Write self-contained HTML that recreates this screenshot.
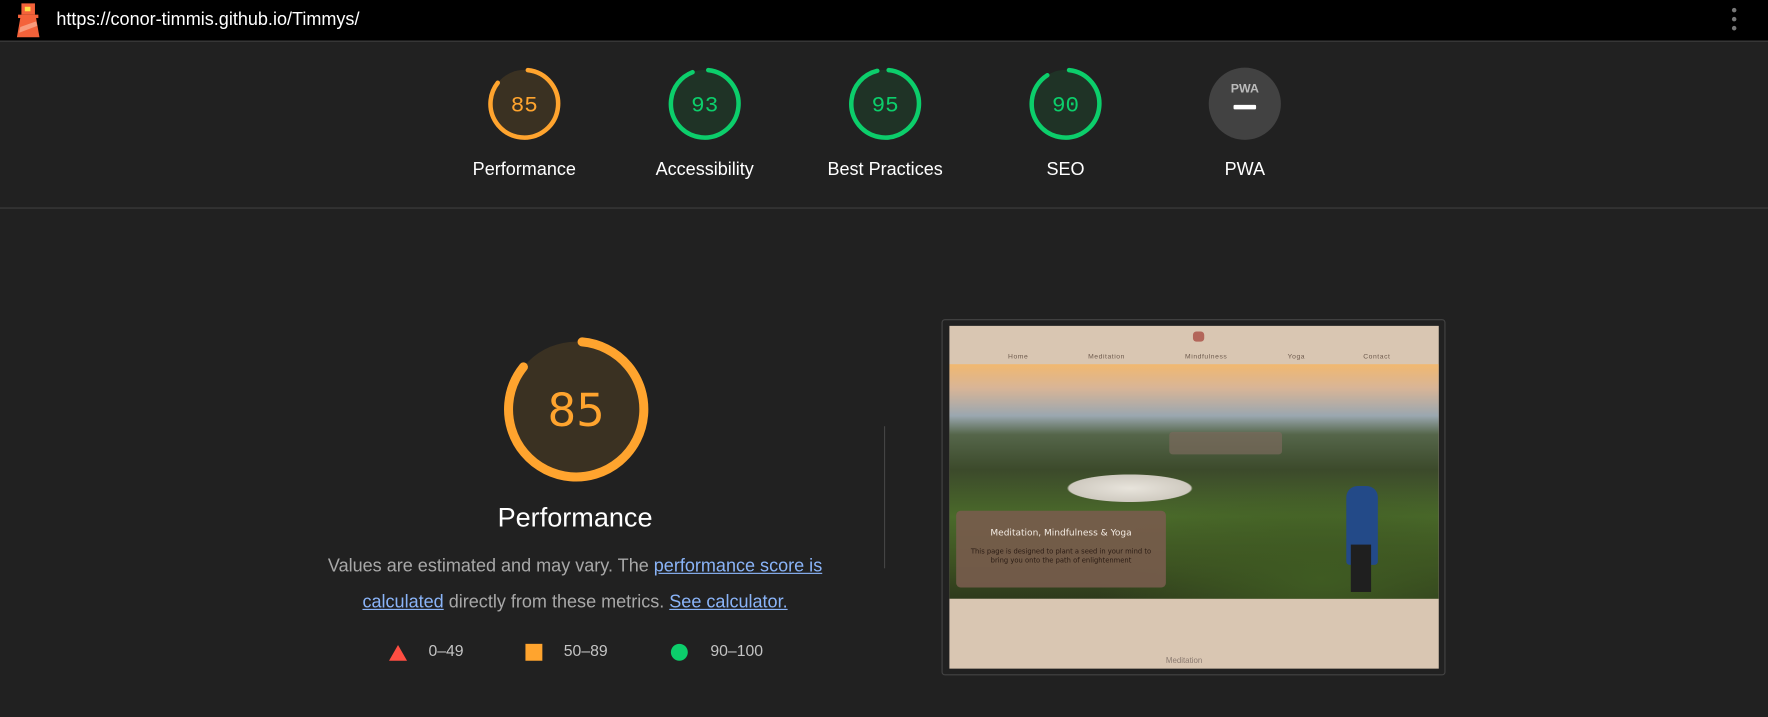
<!DOCTYPE html>
<html><head><meta charset="utf-8"><style>
*{margin:0;padding:0;box-sizing:border-box}
html,body{width:1768px;height:717px;background:#212121;overflow:hidden}
#w{position:absolute;left:0;top:0;width:1568px;height:636px;transform:scale(1.12755);transform-origin:0 0;font-family:"Liberation Sans",Arial,sans-serif;color:#fff}
.top{position:absolute;left:0;top:0;width:1568px;height:37px;background:#000;border-bottom:1px solid #444}
.url{position:absolute;left:50px;top:9px;font-size:16px;color:#fff}
.dots{position:absolute;left:1536px;top:7px}
.dots i{display:block;width:4px;height:4px;border-radius:2px;background:#777;margin-bottom:4px}
.sep{position:absolute;left:0;top:184px;width:1568px;height:1px;background:#3d3d3d}
.g{position:absolute;top:58px;width:140px;text-align:center}
.g svg{display:block;margin:0 auto}
.g .lab{margin-top:16px;font-size:16px;color:#fff}
.num{font-family:"Liberation Mono","DejaVu Sans Mono",monospace}
.desc{position:absolute;left:270px;top:487px;width:480px;text-align:center;font-size:16px;line-height:32px;color:#a8a8a8}
.desc a{color:#8ab4f8;text-decoration:underline}
.leg{position:absolute;top:569px;font-size:14px;color:#c4c4c4}
.vline{position:absolute;left:784px;top:378px;width:1px;height:126px;background:#444}
.shot{position:absolute;left:835px;top:283px;width:447px;height:316px;border:1px solid #444;border-radius:3px;background:#212121}
.in{position:absolute;left:6px;top:5px;width:434px;height:304px;background:#d9c6b2;overflow:hidden}
.nav{position:absolute;top:25px;font-size:6px;color:#6d5a4d;letter-spacing:.5px}
.photo{position:absolute;left:0;top:34px;width:434px;height:208px;background:
radial-gradient(ellipse 90px 20px at 160px 110px,#e8e4dc 0,#cfcac0 60%,rgba(0,0,0,0) 62%),
radial-gradient(ellipse 200px 90px at 330px 190px,#3f5b22,rgba(0,0,0,0)),
linear-gradient(180deg,#f1b870 0,#d9b596 10%,#9aa7b0 22%,#55664a 30%,#3c4a2b 45%,#4a6a2a 65%,#3d5122 85%,#2e3a1c 100%)}
.box{position:absolute;left:6px;top:130px;width:186px;height:68px;background:rgba(120,92,76,.9);border-radius:4px;text-align:center;font-family:"DejaVu Sans",sans-serif}
</style></head><body><div id="w">
<div class="top">
<svg style="position:absolute;left:14px;top:2px" width="22" height="32" viewBox="0 0 22 32"><rect x="5" y="1" width="12" height="10" fill="#f4623a"/><rect x="8" y="4" width="5" height="4" fill="#fde047"/><rect x="2" y="11" width="18" height="3" fill="#f4623a"/><polygon points="4,14 18,14 21,31 1,31" fill="#f4623a"/><polygon points="4,22 18,17 19,21 3,27" fill="#f89b7c"/></svg>
<div class="url">https://conor-timmis.github.io/Timmys/</div>
<div class="dots"><i></i><i></i><i></i></div>
</div>

<div class="g" style="left:395px"><svg width="68" height="68" viewBox="0 0 68 68"><circle cx="34" cy="34" r="30" fill="#3a3122"/><circle cx="34" cy="34" r="30" fill="none" stroke="#ffa42e" stroke-width="4" stroke-linecap="round" stroke-dasharray="158 500" transform="rotate(-84 34 34)"/><text x="34" y="41" text-anchor="middle" font-size="20" fill="#ffa42e" class="num">85</text></svg><div class="lab">Performance</div></div>
<div class="g" style="left:555px"><svg width="68" height="68" viewBox="0 0 68 68"><circle cx="34" cy="34" r="30" fill="#1f3326"/><circle cx="34" cy="34" r="30" fill="none" stroke="#0cce6b" stroke-width="4" stroke-linecap="round" stroke-dasharray="174 500" transform="rotate(-84 34 34)"/><text x="34" y="41" text-anchor="middle" font-size="20" fill="#0cce6b" class="num">93</text></svg><div class="lab">Accessibility</div></div>
<div class="g" style="left:715px"><svg width="68" height="68" viewBox="0 0 68 68"><circle cx="34" cy="34" r="30" fill="#1f3326"/><circle cx="34" cy="34" r="30" fill="none" stroke="#0cce6b" stroke-width="4" stroke-linecap="round" stroke-dasharray="178 500" transform="rotate(-84 34 34)"/><text x="34" y="41" text-anchor="middle" font-size="20" fill="#0cce6b" class="num">95</text></svg><div class="lab">Best Practices</div></div>
<div class="g" style="left:875px"><svg width="68" height="68" viewBox="0 0 68 68"><circle cx="34" cy="34" r="30" fill="#1f3326"/><circle cx="34" cy="34" r="30" fill="none" stroke="#0cce6b" stroke-width="4" stroke-linecap="round" stroke-dasharray="168 500" transform="rotate(-84 34 34)"/><text x="34" y="41" text-anchor="middle" font-size="20" fill="#0cce6b" class="num">90</text></svg><div class="lab">SEO</div></div>
<div class="g" style="left:1034px"><svg width="68" height="68" viewBox="0 0 68 68"><circle cx="34" cy="34" r="32" fill="#424242"/><text x="34" y="24" text-anchor="middle" font-size="11" font-weight="bold" fill="#bbb">PWA</text><rect x="24" y="35" width="20" height="4" rx="1" fill="#fff"/></svg><div class="lab">PWA</div></div>

<div class="sep"></div>

<svg style="position:absolute;left:443px;top:295px" width="136" height="136" viewBox="0 0 136 136"><circle cx="68" cy="68" r="60" fill="#3a3122"/><circle cx="68" cy="68" r="60" fill="none" stroke="#ffa42e" stroke-width="8" stroke-linecap="round" stroke-dasharray="318 500" transform="rotate(-85 68 68)"/><text x="68" y="83" text-anchor="middle" font-size="40" fill="#ffa42e" font-family="DejaVu Sans,sans-serif">85</text></svg>
<div style="position:absolute;left:410px;top:446px;width:200px;text-align:center;font-size:24px;color:#fff">Performance</div>
<div class="desc">Values are estimated and may vary. The <a>performance score is calculated</a> directly from these metrics. <a>See calculator.</a></div>
<svg style="position:absolute;left:345px;top:571px" width="16" height="16"><polygon points="8,1 16,15 0,15" fill="#ff4e42"/></svg>
<div class="leg" style="left:380px">0–49</div>
<div style="position:absolute;left:466px;top:571px;width:15px;height:15px;background:#ffa42e"></div>
<div class="leg" style="left:500px">50–89</div>
<div style="position:absolute;left:595px;top:571px;width:15px;height:15px;border-radius:50%;background:#0cce6b"></div>
<div class="leg" style="left:630px">90–100</div>

<div class="vline"></div>
<div class="shot"><div class="in">
<div style="position:absolute;left:216px;top:5px;width:10px;height:9px;border-radius:3px;background:#b3665a"></div>
<div class="nav" style="left:52px">Home</div>
<div class="nav" style="left:123px">Meditation</div>
<div class="nav" style="left:209px">Mindfulness</div>
<div class="nav" style="left:300px">Yoga</div>
<div class="nav" style="left:367px">Contact</div>
<div class="photo">
<div style="position:absolute;left:195px;top:60px;width:100px;height:20px;background:#7a6a5c;opacity:.7;border-radius:3px"></div>
<div style="position:absolute;left:352px;top:108px;width:28px;height:70px;background:#234a88;border-radius:10px 10px 3px 3px"></div>
<div style="position:absolute;left:356px;top:160px;width:18px;height:42px;background:#1f1f1f"></div>
<div class="box"><div style="font-size:8px;color:#f3ece4;margin-top:15px">Meditation, Mindfulness &amp; Yoga</div><div style="font-size:6px;color:#2a1b14;margin-top:9px;line-height:8px">This page is designed to plant a seed in your mind to<br>bring you onto the path of enlightenment</div></div>
</div>
<div style="position:absolute;left:192px;top:294px;font-size:7px;color:#8a7a70">Meditation</div>
</div></div>
</div></body></html>
